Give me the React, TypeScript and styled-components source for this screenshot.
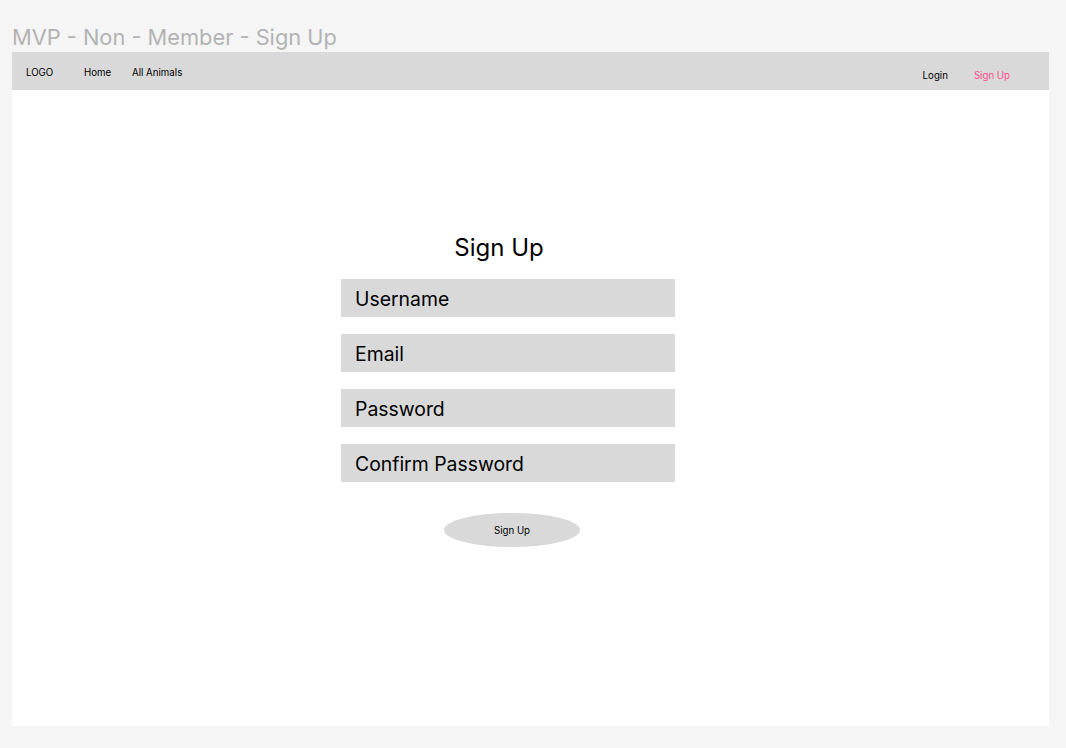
import React from "react";
import styled, { createGlobalStyle } from "styled-components";

const Global = createGlobalStyle`
  html, body { margin: 0; padding: 0; background: #f5f5f5; }
  body { font-family: Inter, "Noto Sans", sans-serif; }
  * { box-sizing: border-box; }
`;

const Page = styled.div`
  width: 1066px;
  height: 748px;
  background: #f5f5f5;
  padding: 22px 0 0 12px;
`;

const PageTitle = styled.div`
  font-size: 21.8px;
  line-height: 30px;
  color: #b3b3b3;
  height: 30px;
  font-weight: 400;
`;

const Frame = styled.div`
  width: 1037px;
  height: 674px;
  background: #ffffff;
  display: flex;
  flex-direction: column;
`;

const NavBar = styled.nav`
  height: 38px;
  background: #d9d9d9;
  display: flex;
  justify-content: space-between;
  padding: 0 39px 0 14px;
`;

const NavGroup = styled.div<{ $top: number; $gap: number }>`
  display: flex;
  align-items: flex-start;
  gap: ${(p) => p.$gap}px;
  padding-top: ${(p) => p.$top}px;
`;

const NavLink = styled.span<{ $accent?: boolean; $w?: number }>`
  font-size: 9.7px;
  line-height: 14px;
  width: ${(p) => (p.$w ? `${p.$w}px` : "auto")};
  color: ${(p) => (p.$accent ? "#ff4a8d" : "#000000")};
`;

const Main = styled.main`
  flex: 1;
  display: flex;
  flex-direction: column;
  padding: 143px 0 0 329px;
`;

const Form = styled.form`
  width: 334px;
  display: flex;
  flex-direction: column;
`;

const Heading = styled.h1`
  margin: 0 18px 16px 0;
  font-size: 24px;
  line-height: 30px;
  font-weight: 400;
  text-align: center;
  color: #000;
`;

const Field = styled.div`
  height: 38px;
  background: #d9d9d9;
  display: flex;
  align-items: center;
  padding: 2px 0 0 14px;
  font-size: 19.4px;
  color: #000;
  margin-bottom: 17px;
`;

const SubmitButton = styled.div`
  align-self: center;
  margin: 14px 0 0 8px;
  width: 136px;
  height: 34px;
  border-radius: 50%;
  background: #d9d9d9;
  display: flex;
  align-items: center;
  justify-content: center;
  font-size: 9.7px;
  color: #000;
`;

const fields = ["Username", "Email", "Password", "Confirm Password"];

export default function App() {
  return (
    <>
      <Global />
      <Page>
        <PageTitle>MVP - Non - Member - Sign Up</PageTitle>
        <Frame>
          <NavBar>
            <NavGroup $top={14} $gap={0}>
              <NavLink $w={58}>LOGO</NavLink>
              <NavLink $w={48}>Home</NavLink>
              <NavLink>All Animals</NavLink>
            </NavGroup>
            <NavGroup $top={17} $gap={26}>
              <NavLink>Login</NavLink>
              <NavLink $accent>Sign Up</NavLink>
            </NavGroup>
          </NavBar>
          <Main>
            <Form>
              <Heading>Sign Up</Heading>
              {fields.map((f) => (
                <Field key={f}>{f}</Field>
              ))}
              <SubmitButton>Sign Up</SubmitButton>
            </Form>
          </Main>
        </Frame>
      </Page>
    </>
  );
}
